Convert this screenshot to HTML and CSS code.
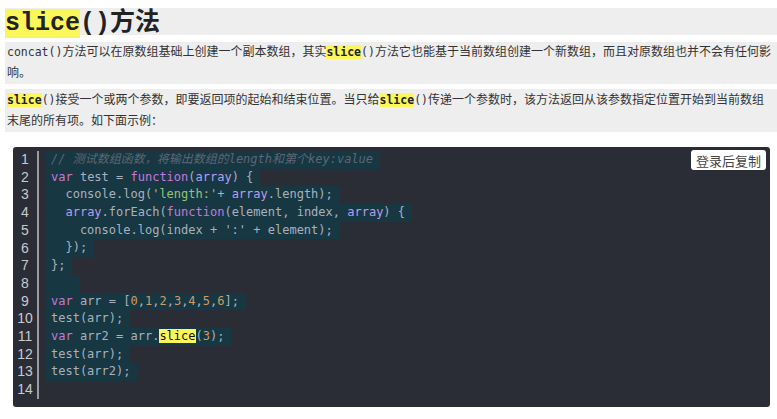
FILE: index.html
```html
<!DOCTYPE html>
<html lang="zh">
<head>
    <meta charset="UTF-8">
    <title>slice()方法</title>
    <meta name="viewport" content="width=device-width,initial-scale=1">
    <link rel="stylesheet" href="styles.css">
</head>
<body>

<div class="article">
    <h2 class="title"><code class="hl">slice</code><code>()</code>方法</h2>
    <p class="para"><code>concat()</code>方法可以在原数组基础上创建一个副本数组，其实<code class="hl">slice</code><code>()</code>方法它也能基于当前数组创建一个新数组，而且对原数组也并不会有任何影响。</p>
    <p class="para"><code class="hl">slice</code><code>()</code>接受一个或两个参数，即要返回项的起始和结束位置。当只给<code class="hl">slice</code><code>()</code>传递一个参数时，该方法返回从该参数指定位置开始到当前数组<br>末尾的所有项。如下面示例：</p>

    <div class="code-box">
        <button class="copy">登录后复制</button>
        <ul class="gutter"><!--行号-->
            <li>1</li><li>2</li><li>3</li><li>4</li><li>5</li><li>6</li><li>7</li>
            <li>8</li><li>9</li><li>10</li><li>11</li><li>12</li><li>13</li><li>14</li>
        </ul>
        <div class="code">
            <div class="line"><span class="sel"><i class="c">// 测试数组函数，将输出数组的length和第个key:value</i></span></div>
            <div class="line"><span class="sel"><b class="k">var</b> test = <b class="k">function</b>(<b class="v">array</b>) {</span></div>
            <div class="line"><span class="sel">  console.log(<b class="s">'length:'</b>+ <b class="v">array</b>.length);</span></div>
            <div class="line"><span class="sel">  <b class="v">array</b>.forEach(<b class="k">function</b>(element, index, <b class="v">array</b>) {</span></div>
            <div class="line"><span class="sel">    console.log(index + ':' + element);</span></div>
            <div class="line"><span class="sel">  });</span></div>
            <div class="line"><span class="sel">};</span></div>
            <div class="line"><span class="sel">   </span></div>
            <div class="line"><span class="sel"><b class="k">var</b> arr = [<b class="n">0</b>,<b class="n">1</b>,<b class="n">2</b>,<b class="n">3</b>,<b class="n">4</b>,<b class="n">5</b>,<b class="n">6</b>];</span></div>
            <div class="line"><span class="sel">test(arr);</span></div>
            <div class="line"><span class="sel"><b class="k">var</b> arr2 = arr.<mark class="m">slice</mark>(<b class="n">3</b>);</span></div>
            <div class="line"><span class="sel">test(arr);</span></div>
            <div class="line"><span class="sel">test(arr2);</span></div>
            <div class="line"></div>
        </div>
    </div>
</div>

</body>
</html>
```

FILE: styles.css
```css
body{
    margin: 0;
    background: #fff;
    color: #333;
    font-family: "Liberation Sans", "Noto Sans CJK SC", sans-serif;
}
.article{
    padding: 8px 0 0 5px;
}
code{
    font-family: "DejaVu Sans Mono", "Liberation Mono", monospace;
}
.hl{
    background: #fbf65a;
    color: #222;
    font-weight: bold;
}

.title{
    margin: 0;
    height: 27px;
    line-height: 27px;
    background: #eee;
    font-size: 25px;
    font-weight: bold;
    color: #222;
}
.title code{
    font-family: "Liberation Mono", monospace;
    font-size: 25px;
    font-weight: bold;
}

.para{
    margin: 7px 0 0;
    padding: 0 0 0 2px;
    background: #eee;
    font-size: 12px;
    line-height: 21px;
}
.para + .para{
    margin-top: 5px;
    padding-top: 1px;
}
.para code{
    font-size: 11.5px;
}

.code-box{
    position: relative;
    display: flex;
    margin: 15px 7px 0 8px;
    padding: 4px 0 8px;
    background: #2a2d35;
    border-radius: 3px;
}
.copy{
    position: absolute;
    top: 3px;
    right: 4px;
    height: 20px;
    padding: 0 5px;
    border: 0;
    border-radius: 3px;
    background: #fff;
    color: #444;
    font: 13px "Noto Sans CJK SC", sans-serif;
}
ul{
    margin: 0;
    padding: 0;
    list-style: none;
}
.gutter{
    width: 24px;
    margin-right: 7px;
    border-right: 2px solid #9a9ca0;
    color: #c8cacc;
    font-size: 14px;
    line-height: 17.7px;
    text-align: center;
}
.code{
    flex: 1;
    font-family: "DejaVu Sans Mono", "Noto Sans CJK SC", monospace;
    font-size: 12px;
    line-height: 17.7px;
    color: #aab1bd;
}
.line{
    height: 17.7px;
    white-space: pre;
}
.sel{
    display: inline-block;
    padding: 0 7px 0 5px;
    background: #173743;
}
.code b{
    font-weight: normal;
}
.c{
    color: #5c6773;
}
.k{
    color: #c678dd;
}
.v{
    color: #b89ef0;
}
.s{
    color: #98c379;
}
.n{
    color: #d19a66;
}
.m{
    background: #fbf65a;
    color: #111;
}
```
